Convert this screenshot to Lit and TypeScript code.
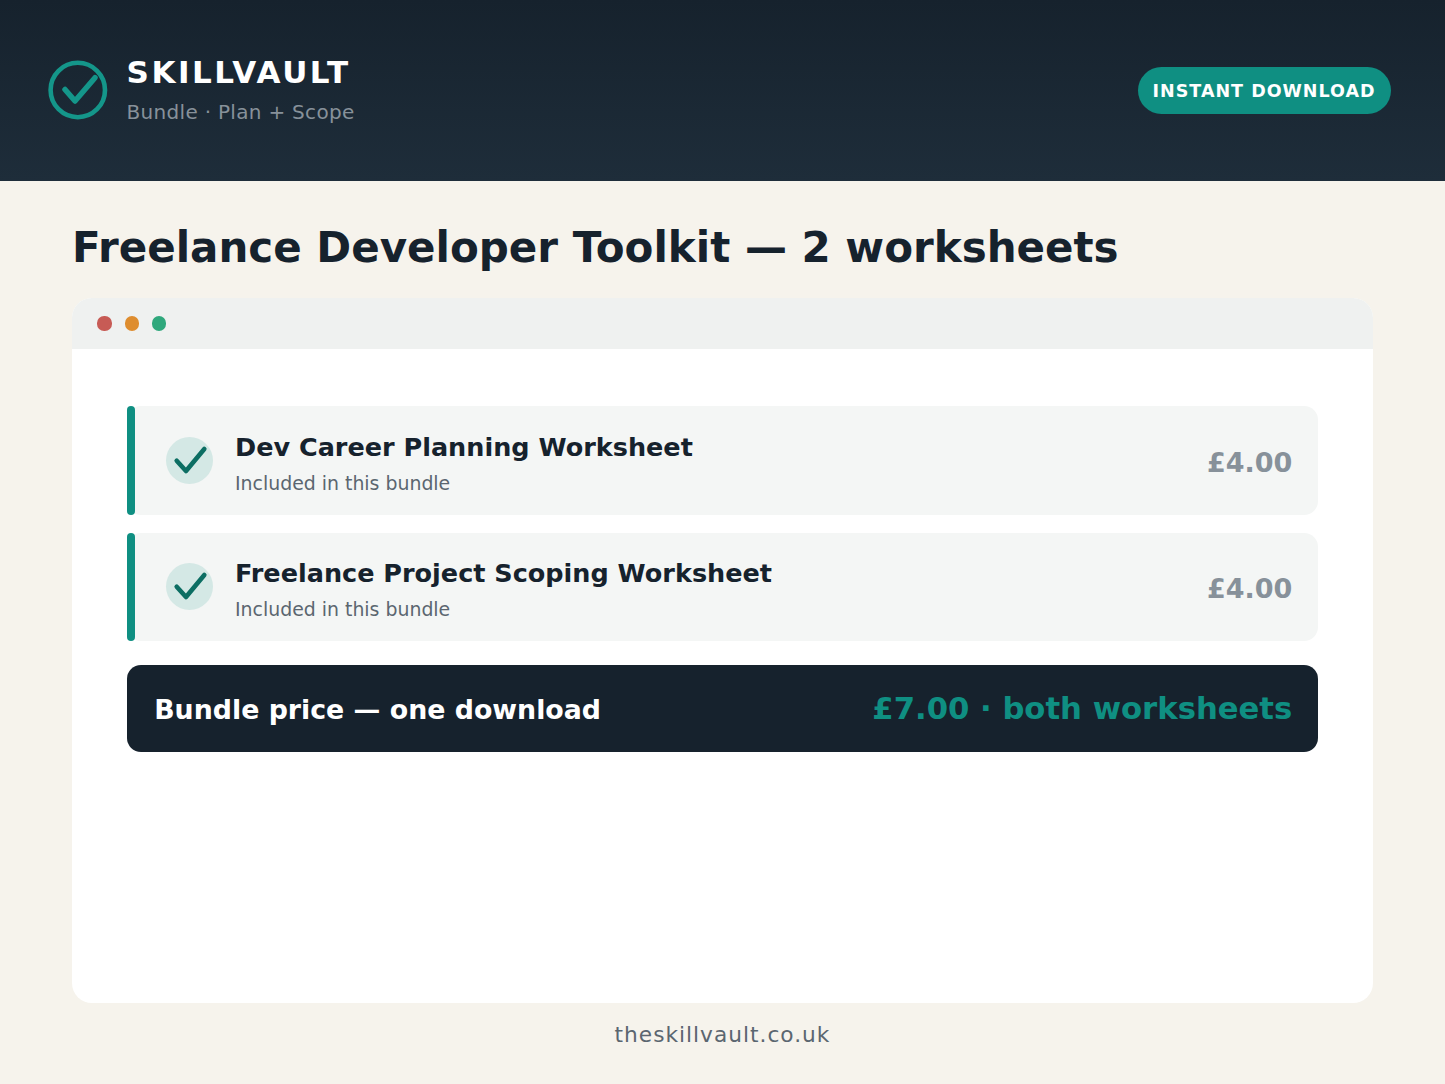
import { LitElement, html, css } from "lit";
import { customElement } from "lit/decorators.js";

const items = [
  { name: "Dev Career Planning Worksheet", price: "£4.00" },
  { name: "Freelance Project Scoping Worksheet", price: "£4.00" },
];

@customElement("app-root")
export class AppRoot extends LitElement {
  static styles = css`
    :host {
      display: flex;
      flex-direction: column;
      height: 1084px;
      background: #f6f3ec;
      font-family: "DejaVu Sans", sans-serif;
      color: #16222d;
    }
    .header {
      height: 180.6px;
      box-sizing: border-box;
      flex: none;
      background: linear-gradient(180deg, #16222d, #1e2d3a);
      display: flex;
      align-items: center;
      justify-content: space-between;
      padding: 0 54.5px 0 48px;
    }
    .brand { display: flex; align-items: center; gap: 18.6px; }
    .logo { width: 60px; height: 60px; display: block; }
    .brand-text { padding-bottom: 2px; }
    .brand-name {
      font-size: 31px;
      line-height: 36px;
      font-weight: 700;
      letter-spacing: 2.5px;
      color: #fff;
    }
    .brand-sub {
      font-size: 20px;
      line-height: 24px;
      margin-top: 10px;
      letter-spacing: 0.3px;
      color: #87919a;
    }
    .pill {
      background: #0f8f82;
      color: #fff;
      font-size: 17.5px;
      font-weight: 700;
      letter-spacing: 1px;
      line-height: 49px;
      height: 47px;
      padding: 0 15px;
      border-radius: 24px;
    }
    .main {
      flex: 1;
      display: flex;
      flex-direction: column;
      padding: 0 72px;
      min-height: 0;
    }
    h1 {
      margin: 0;
      flex: none;
      box-sizing: border-box;
      height: 117.7px;
      padding-top: 41px;
      font-size: 42px;
      line-height: 52px;
      font-weight: 700;
      color: #16222d;
    }
    .card {
      background: #fff;
      border-radius: 20px;
      height: 704.7px;
      overflow: hidden;
      flex: none;
    }
    .bar {
      height: 50.5px;
      box-sizing: border-box;
      background: #eff1f0;
      display: flex;
      align-items: center;
      gap: 13px;
      padding: 0 25.4px;
    }
    .dot { width: 14.2px; height: 14.2px; border-radius: 50%; }
    .red { background: #c75b55; }
    .amber { background: #de8d2f; }
    .green { background: #2fa87c; }
    .content {
      padding: 57.7px 54.7px 0 54.7px;
      display: flex;
      flex-direction: column;
      gap: 17.8px;
    }
    .row {
      height: 108.4px;
      box-sizing: border-box;
      display: flex;
      align-items: center;
      background: #f4f6f5;
      border-radius: 14px;
      padding-right: 26px;
      position: relative;
    }
    .row::before {
      content: "";
      position: absolute;
      left: 0;
      top: 0;
      bottom: 0;
      width: 8.8px;
      border-radius: 5px;
      background: #0f8f82;
    }
    .tick {
      width: 47px;
      height: 47px;
      margin-left: 39.3px;
      border-radius: 50%;
      background: #d4e8e5;
      flex: none;
      display: flex;
    }
    .tick svg { width: 47px; height: 47px; display: block; }
    .info { flex: 1; margin-left: 22px; padding-top: 5px; }
    .name { font-size: 25.5px; line-height: 32px; font-weight: 700; color: #16222d; }
    .note { font-size: 18.9px; line-height: 24px; margin-top: 8px; color: #5b6670; }
    .price { font-size: 27px; font-weight: 700; color: #87919a; padding-top: 3px; }
    .total {
      margin-top: 6.4px;
      height: 86.7px;
      box-sizing: border-box;
      background: #16222d;
      border-radius: 14px;
      display: flex;
      align-items: center;
      justify-content: space-between;
      padding: 0 26px 0 27.5px;
    }
    .total-label { font-size: 26.8px; font-weight: 700; color: #fff; padding-top: 2px; }
    .total-value { font-size: 30.7px; font-weight: 700; color: #0f8f82; }
    .footer {
      flex: 1;
      display: flex;
      align-items: center;
      justify-content: center;
      font-size: 21.7px;
      letter-spacing: 1px;
      color: #5b6670;
      padding-bottom: 17px;
    }
  `;

  render() {
    return html`
      <div class="header">
        <div class="brand">
          <svg class="logo" viewBox="0 0 60 60" fill="none">
            <circle cx="29.8" cy="30" r="27.2" stroke="#14968a" stroke-width="4.6"></circle>
            <path d="M17 29.5 L27 41 L47 17.7" stroke="#14968a" stroke-width="5.5" stroke-linecap="round" stroke-linejoin="round"></path>
          </svg>
          <div class="brand-text">
            <div class="brand-name">SKILLVAULT</div>
            <div class="brand-sub">Bundle · Plan + Scope</div>
          </div>
        </div>
        <div class="pill">INSTANT DOWNLOAD</div>
      </div>
      <div class="main">
        <h1>Freelance Developer Toolkit — 2 worksheets</h1>
        <div class="card">
          <div class="bar">
            <span class="dot red"></span><span class="dot amber"></span><span class="dot green"></span>
          </div>
          <div class="content">
            ${items.map(
              (i) => html`<div class="row">
                <div class="tick">
                  <svg viewBox="0 0 47 47" fill="none">
                    <path d="M10.7 23.7 L20 34 L38.3 12" stroke="#0c6e63" stroke-width="4.6" stroke-linecap="round" stroke-linejoin="round"></path>
                  </svg>
                </div>
                <div class="info">
                  <div class="name">${i.name}</div>
                  <div class="note">Included in this bundle</div>
                </div>
                <div class="price">${i.price}</div>
              </div>`
            )}
            <div class="total">
              <div class="total-label">Bundle price — one download</div>
              <div class="total-value">£7.00 · both worksheets</div>
            </div>
          </div>
        </div>
        <div class="footer">theskillvault.co.uk</div>
      </div>
    `;
  }
}
